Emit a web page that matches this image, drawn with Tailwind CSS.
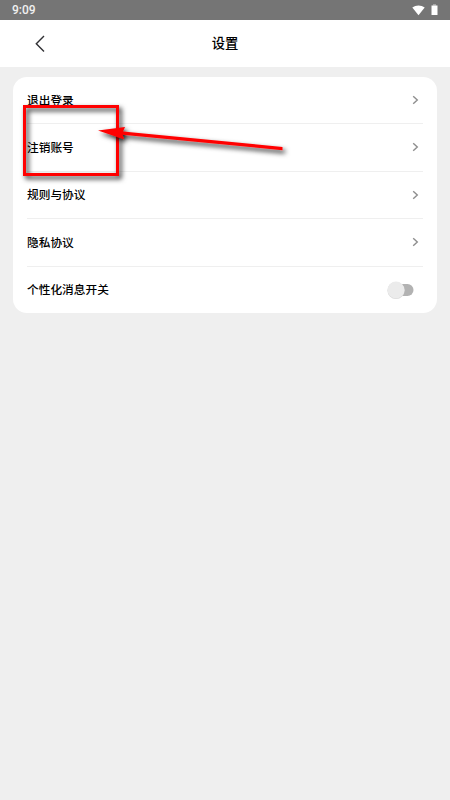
<!DOCTYPE html>
<html lang="zh-CN">
<head>
<meta charset="utf-8">
<title>设置</title>
<script src="https://cdn.jsdelivr.net/npm/@tailwindcss/browser@4"></script>
</head>
<body class="relative h-[800px] w-[450px] overflow-hidden bg-[#efefef] font-['Noto_Sans_CJK_SC',sans-serif] text-black">
<div class="flex h-5 items-center bg-[#757575] pl-3 pr-[12px]">
  <span class="font-['Roboto',sans-serif] text-[12px] leading-5 font-medium text-[#f0f0f0]">9:09</span>
  <svg class="ml-auto h-[11px] w-[13px]" viewBox="0 0 13 11"><path d="M.3 2.400C4-.3 9-.3 12.700 2.400L6.500 10.200Z" fill="#fff"/></svg>
  <svg class="ml-[6px] h-[12px] w-[7px]" viewBox="0 0 7 12"><path d="M2 .3h3v1.200H2z" fill="#bbb"/><path d="M.5 1.500h6v9.500h-6z" fill="#fff"/></svg>
</div>
<header class="grid h-[47px] grid-cols-3 items-center bg-white">
  <svg class="ml-[34px] h-[18px] w-[12px]" viewBox="0 0 12 18" fill="none" stroke="#303034" stroke-width="1.400"><path d="M10 1L2.300 8.700l7.700 7.800"/></svg>
  <h1 class="pb-px text-center text-[13.3px] leading-5 font-medium">设置</h1>
</header>
<main class="mx-[13px] mt-[10px] h-[236px] rounded-[14px] bg-white px-[14px] text-[11.7px] font-medium">
  <div class="flex h-[47px] items-center justify-between border-b border-[#efefef]"><span>退出登录</span><svg class="mr-[4px] h-[10px] w-[7px]" viewBox="0 0 7 10" fill="none" stroke="#8e8e8e" stroke-width="1.400"><path d="M1.200 1.200L5.300 5 1.200 8.800"/></svg></div>
  <div class="flex h-[47.5px] items-center justify-between border-b border-[#efefef]"><span>注销账号</span><svg class="mr-[4px] h-[10px] w-[7px]" viewBox="0 0 7 10" fill="none" stroke="#8e8e8e" stroke-width="1.400"><path d="M1.200 1.200L5.300 5 1.200 8.800"/></svg></div>
  <div class="flex h-[47.5px] items-center justify-between border-b border-[#efefef]"><span class="pb-px">规则与协议</span><svg class="mr-[4px] h-[10px] w-[7px]" viewBox="0 0 7 10" fill="none" stroke="#8e8e8e" stroke-width="1.400"><path d="M1.200 1.200L5.300 5 1.200 8.800"/></svg></div>
  <div class="flex h-[47.5px] items-center justify-between border-b border-[#efefef]"><span>隐私协议</span><svg class="mr-[4px] h-[10px] w-[7px]" viewBox="0 0 7 10" fill="none" stroke="#8e8e8e" stroke-width="1.400"><path d="M1.200 1.200L5.300 5 1.200 8.800"/></svg></div>
  <div class="flex h-[46.500px] items-center justify-between"><span class="pb-px">个性化消息开关</span><svg class="mr-[8px] h-[20px] w-[30px]" viewBox="0 0 30 20"><rect x="7" y="4" width="21.500" height="12" rx="6" fill="#b2b2b2"/><circle cx="11" cy="10.500" r="8.600" fill="#d8d8d8"/><circle cx="11" cy="10" r="8.500" fill="#ebebeb"/></svg></div>
</main>
<svg class="absolute left-0 top-0 h-[800px] w-[450px]" viewBox="0 0 450 800">
  <defs><filter id="shade" x="-20%" y="-50%" width="140%" height="220%"><feDropShadow dx="2.500" dy="3" stdDeviation="2.500" flood-color="#000" flood-opacity=".85"/></filter></defs>
  <rect x="24.500" y="106.500" width="93" height="68" fill="none" stroke="#f00" stroke-width="3" filter="url(#shade)"/>
  <path d="M98 130.500L125 127l-2 4.400L282.500 147v3.200L122.500 134.800 124 139.200Z" fill="#f00" filter="url(#shade)"/>
</svg>
</body>
</html>
